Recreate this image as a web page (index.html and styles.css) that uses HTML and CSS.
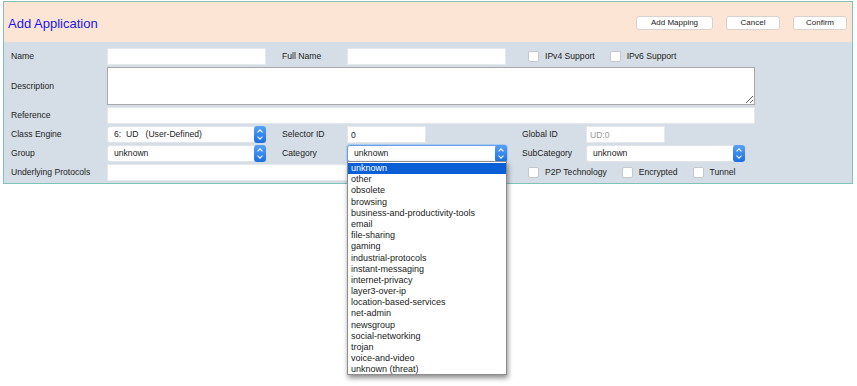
FILE: index.html
```html
<!DOCTYPE html>
<html lang="en">
<head>
  <meta charset="UTF-8" />
  <title>Add Application</title>
  <link rel="stylesheet" href="styles.css">
</head>
<body>

<div class="panel">
  <div class="header">
    <h1 class="title">Add Application</h1>
    <div class="actions">
      <button class="btn btn-wide">Add Mapping</button>
      <button class="btn">Cancel</button>
      <button class="btn">Confirm</button>
    </div>
  </div>

  <div class="form">
    <label class="lbl">Name</label>
    <div class="cell"><input class="field"></div>
    <label class="lbl">Full Name</label>
    <div class="cell"><input class="field"></div>
    <div class="checks span2">
      <span class="check"><span class="box"></span>IPv4 Support</span>
      <span class="check"><span class="box"></span>IPv6 Support</span>
    </div>

    <label class="lbl">Description</label>
    <div class="cell span-wide"><textarea class="area"></textarea></div>

    <label class="lbl">Reference</label>
    <div class="cell span-wide"><input class="field ref"></div>

    <label class="lbl">Class Engine</label>
    <div class="cell">
      <div class="select">6:&nbsp; UD&nbsp;&nbsp; (User-Defined)<span class="arrow"></span></div>
    </div>
    <label class="lbl">Selector ID</label>
    <div class="cell"><input class="field short" value="0"></div>
    <label class="lbl">Global ID</label>
    <div class="cell"><input class="field short muted" value="UD:0"></div>

    <label class="lbl">Group</label>
    <div class="cell">
      <div class="select">unknown<span class="arrow"></span></div>
    </div>
    <label class="lbl">Category</label>
    <div class="cell dropwrap">
      <div class="select focus">unknown<span class="arrow"></span></div>
      <ul class="options">
        <li class="picked">unknown</li>
        <li>other</li>
        <li>obsolete</li>
        <li>browsing</li>
        <li>business-and-productivity-tools</li>
        <li>email</li>
        <li>file-sharing</li>
        <li>gaming</li>
        <li>industrial-protocols</li>
        <li>instant-messaging</li>
        <li>internet-privacy</li>
        <li>layer3-over-ip</li>
        <li>location-based-services</li>
        <li>net-admin</li>
        <li>newsgroup</li>
        <li>social-networking</li>
        <li>trojan</li>
        <li>voice-and-video</li>
        <li>unknown (threat)</li>
      </ul>
    </div>
    <label class="lbl">SubCategory</label>
    <div class="cell">
      <div class="select">unknown<span class="arrow"></span></div>
    </div>

    <label class="lbl">Underlying Protocols</label>
    <div class="cell span3"><input class="field proto"></div>
    <div class="checks span2">
      <span class="check"><span class="box"></span>P2P Technology</span>
      <span class="check"><span class="box"></span>Encrypted</span>
      <span class="check"><span class="box"></span>Tunnel</span>
    </div>
  </div>
</div>

</body>
</html>
```

FILE: styles.css
```css
body {
  margin: 0;
  min-height: 386px;
  font-family: Tahoma, "Liberation Sans", Arial, sans-serif;
  font-size: 8.6px;
  color: #1c1c1c;
  background: #fff;
}
.panel {
  position: relative;
  width: 848px;
  margin: 1px 0 0 3px;
  border: 1px solid #7fc2b8;
}
.header {
  height: 40px;
  background: #fde5d5;
  display: flex;
  align-items: center;
  justify-content: space-between;
  padding: 0 5px 0 4px;
}
.title {
  margin: 2px 0 0;
  font-size: 13px;
  font-weight: normal;
  color: #1515f2;
}
.actions {
  display: flex;
  gap: 13px;
  margin-top: 1px;
}
.btn {
  width: 54px;
  height: 14px;
  padding: 0;
  font-family: inherit;
  font-size: 8px;
  color: #222;
  background: #fff;
  border: 1px solid #d8d2cc;
  border-radius: 3px;
}
.btn-wide {
  width: 77px;
}
.form {
  display: grid;
  grid-template-columns: 96px 175px 65px 175px 64px 1fr;
  row-gap: 2px;
  align-items: center;
  background: #d5dee6;
  padding: 6px 0 2px 7px;
}
.lbl {
  line-height: 17px;
}
.cell {
  display: flex;
  align-items: center;
}
.span-wide {
  grid-column: 2 / -1;
}
.span3 {
  grid-column: 2 / 5;
}
.span2 {
  grid-column: 5 / 7;
}
.field {
  box-sizing: border-box;
  width: 159px;
  height: 17px;
  border: 1px solid #e4e8ec;
  background: #fff;
  padding: 0 3px;
  font-family: inherit;
  font-size: 8.6px;
  color: #1c1c1c;
  outline: none;
}
.field.short {
  width: 79px;
}
.field.muted {
  color: #999;
}
.field.ref {
  width: 648px;
}
.field.proto {
  width: 398px;
}
.area {
  box-sizing: border-box;
  width: 648px;
  height: 38px;
  border: 1px solid #a8a8a8;
  background: #fff;
  resize: both;
  margin: 0;
}
.select {
  position: relative;
  box-sizing: border-box;
  width: 159px;
  height: 17px;
  line-height: 15px;
  padding-left: 6px;
  background: #fff;
  border: 1px solid #e0e4e8;
  border-radius: 3px;
  white-space: nowrap;
}
.select.focus {
  width: 160px;
  border-color: #6a9fe6;
  box-shadow: 0 0 0 1px #a9c8f2;
}
.arrow {
  position: absolute;
  right: -1px;
  top: -1px;
  width: 12px;
  height: 17px;
  border-radius: 3px;
  background: linear-gradient(#58a2f6, #1b6fe3);
}
.arrow::before,
.arrow::after {
  content: "";
  position: absolute;
  left: 4px;
  width: 3px;
  height: 3px;
  border-left: 1px solid #fff;
  border-top: 1px solid #fff;
}
.arrow::before {
  top: 4px;
  transform: rotate(45deg);
}
.arrow::after {
  top: 9px;
  transform: rotate(225deg);
}
.checks {
  display: flex;
  align-items: center;
  padding-left: 6px;
  line-height: 17px;
}
.check {
  display: flex;
  align-items: center;
  margin-right: 15px;
}
.box {
  box-sizing: border-box;
  width: 11px;
  height: 11px;
  margin-right: 6px;
  background: #fff;
  border: 1px solid #c4c8cc;
  border-radius: 2px;
}
.dropwrap {
  position: relative;
}
.options {
  position: absolute;
  left: 0;
  top: 16px;
  z-index: 2;
  box-sizing: border-box;
  width: 160px;
  height: 214px;
  margin: 0;
  padding: 1px 0 2px;
  list-style: none;
  background: #fff;
  border: 1px solid #8c8c8c;
  box-shadow: 1px 3px 5px rgba(0, 0, 0, 0.45);
  font-size: 9px;
}
.options li {
  display: block;
  height: 11.2px;
  line-height: 11.2px;
  padding-left: 3px;
  color: #1a1a1a;
  white-space: nowrap;
}
.options li.picked {
  background: #0b5fd6;
  color: #fff;
}
```
